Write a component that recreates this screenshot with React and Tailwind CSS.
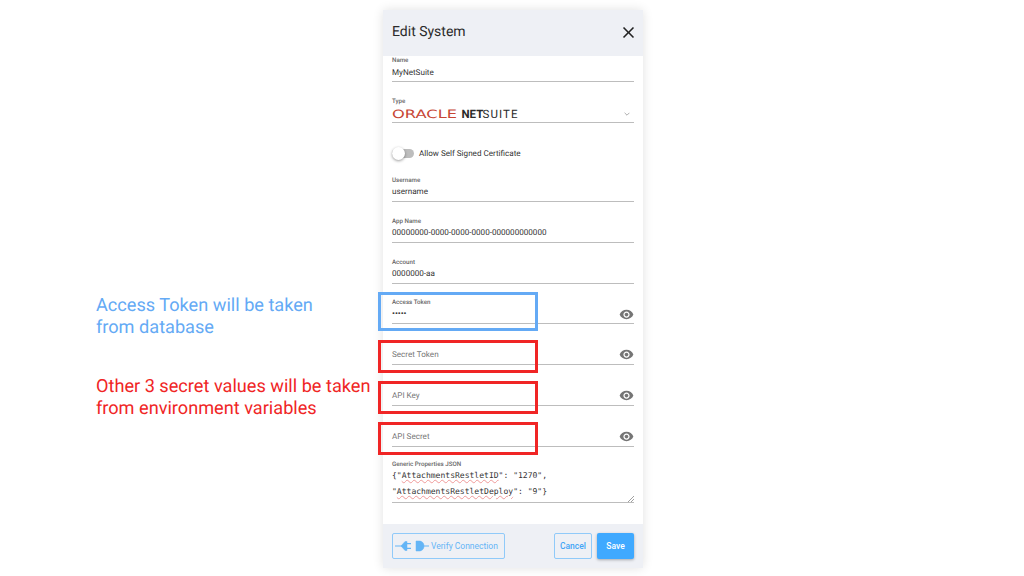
import React from "react";

const EyeIcon = () => (
  <svg viewBox="0 0 24 24" className="w-[15px] h-[15px] fill-[#757575] shrink-0">
    <path d="M12 4.5C7 4.5 2.73 7.61 1 12c1.73 4.39 6 7.5 11 7.5s9.27-3.11 11-7.5c-1.73-4.39-6-7.5-11-7.5zM12 17c-2.76 0-5-2.24-5-5s2.24-5 5-5 5 2.24 5 5-2.24 5-5 5zm0-8c-1.66 0-3 1.34-3 3s1.34 3 3 3 3-1.34 3-3-1.34-3-3-3z" />
  </svg>
);

const PlugIcon = () => (
  <svg viewBox="0 0 34 12" className="w-[34px] h-[12px] shrink-0 fill-[#64b5f6] stroke-[#64b5f6]">
    <path d="M0 6h7" strokeWidth="1" />
    <path d="M6 6l4-4.5h2v9h-2z" strokeWidth="0.5" />
    <path d="M12 3.7h4M12 8.3h4" strokeWidth="1.3" />
    <path d="M21 1h3.5c2.8 0 4.5 2.4 4.5 5s-1.7 5-4.5 5H21z" strokeWidth="0.5" />
    <path d="M29 6h5" strokeWidth="1" />
  </svg>
);

const Label = ({ children }) => (
  <div className="text-[6.2px] leading-[8px] font-medium text-[#666]">{children}</div>
);

// plain underlined field, all of them are on a 41px grid
const Field = ({ label, value }) => (
  <div className="h-[41px] pt-[15px]">
    <Label>{label}</Label>
    <div className="h-[14px] text-[8.1px] leading-[14px] text-[#333]">{value}</div>
    <div className="mt-[3px] h-px bg-[#bdbdbd]" />
  </div>
);

const SecretField = ({ label }) => (
  <div className="relative h-[41px] flex flex-col justify-end">
    <div className="absolute left-[-14px] top-[16px] w-[160px] h-[33px] border-[3px] border-[#f02525]" />
    <div className="flex items-center justify-between h-[20px]">
      <span className="text-[8.1px] leading-[20px] text-[#777]">{label}</span>
      <EyeIcon />
    </div>
    <div className="h-px bg-[#bdbdbd]" />
  </div>
);

export default function App() {
  return (
    <div className="w-[1024px] h-[576px] overflow-hidden bg-white flex font-['Roboto',sans-serif] [text-rendering:geometricPrecision]">
      <div className="w-[383px] pl-[96px] pt-[295px] shrink-0">
        <p className="text-[18.15px] leading-[22px] text-[#64aaf5]">
          Access Token will be taken
          <br />
          from database
        </p>
        <p className="mt-[37px] text-[18.15px] leading-[22px] text-[#f02525] whitespace-nowrap">
          Other 3 secret values will be taken
          <br />
          from environment variables
        </p>
      </div>

      <div className="w-[260px] h-[558px] mt-[10px] flex flex-col bg-white shadow-[0_0_10px_rgba(0,0,0,0.12)]">
        <div className="h-[46px] shrink-0 bg-[#eef0f5] flex items-center justify-between pl-[9px] pr-[5px] pb-[2px]">
          <span className="text-[14px] text-[#2b2b2b]">Edit System</span>
          <svg viewBox="0 0 24 24" className="w-[19px] h-[19px] fill-[#222]">
            <path d="M19 6.41 17.59 5 12 10.59 6.41 5 5 6.41 10.59 12 5 17.59 6.41 19 12 13.41 17.59 19 19 17.59 13.41 12z" />
          </svg>
        </div>

        <div className="flex-1 px-[9px]">
          <div className="h-[26px]">
            <Label>Name</Label>
            <div className="mt-[1px] h-[14px] text-[8.1px] leading-[14px] text-[#333]">MyNetSuite</div>
            <div className="mt-[2px] h-px bg-[#bdbdbd]" />
          </div>

          <div className="mt-[15px]">
            <Label>Type</Label>
            <div className="flex items-center justify-between h-[17px]">
              <svg viewBox="0 0 130 12" className="w-[130px] h-[12px]">
                <text x="0" y="9.5" fontSize="11.5" textLength="65" lengthAdjust="spacingAndGlyphs" fill="#c74634" fontFamily="DejaVu Sans">ORACLE</text>
                <text x="69.5" y="9.5" fontSize="11.5" fontWeight="700" fill="#2a2a2a" fontFamily="Roboto">NET</text>
                <text x="90.5" y="9.5" fontSize="11.5" textLength="35" fill="#2a2a2a" fontFamily="Roboto">SUITE</text>
              </svg>
              <svg viewBox="0 0 10 6" className="w-[6px] h-[4px] mr-[4px] stroke-[#777] fill-none">
                <path d="M1 1l4 4 4-4" strokeWidth="1" />
              </svg>
            </div>
            <div className="h-px bg-[#bdbdbd]" />
          </div>

          <div className="mt-[24px] h-[13px] flex items-center gap-[5px]">
            <div className="relative w-[22px] h-[9px] rounded-full bg-[#bdbdbd]">
              <div className="absolute left-0 top-[-2px] w-[13px] h-[13px] rounded-full bg-white shadow-[0_1px_3px_rgba(0,0,0,0.4)]" />
            </div>
            <span className="text-[8.1px] text-[#333]">Allow Self Signed Certificate</span>
          </div>

          <div className="mt-[1px]">
            <Field label="Username" value="username" />
            <Field label="App Name" value="00000000-0000-0000-0000-000000000000" />
            <Field label="Account" value="0000000-aa" />
          </div>

          <div className="relative h-[40px] pt-[14px]">
            <div className="absolute left-[-14px] top-[8px] bottom-[-7px] w-[160px] border-[3px] border-[#64aaf5]" />
            <Label>Access Token</Label>
            <div className="flex items-center justify-between h-[16px]">
              <span className="text-[8px] font-bold leading-[16px] text-[#333]">•••••</span>
              <EyeIcon />
            </div>
            <div className="mt-[1px] h-px bg-[#bdbdbd]" />
          </div>

          <SecretField label="Secret Token" />
          <SecretField label="API Key" />
          <SecretField label="API Secret" />

          <div className="mt-[13px]">
            <Label>Generic Properties JSON</Label>
            <div className="relative h-[34px] font-['DejaVu_Sans_Mono',monospace] text-[8.05px] leading-[16px] text-[#333]">
              <div>
                {'{"'}
                <span className="underline decoration-wavy decoration-[#ef9a9a] decoration-[0.6px]">AttachmentsRestletID</span>
                {'": "1270",'}
              </div>
              <div>
                {'"'}
                <span className="underline decoration-wavy decoration-[#ef9a9a] decoration-[0.6px]">AttachmentsRestletDeploy</span>
                {'": "9"}'}
              </div>
              <svg viewBox="0 0 6 6" className="absolute right-0 bottom-0 w-[6px] h-[6px] stroke-[#777]">
                <path d="M0 6l6-6M3 6l3-3" strokeWidth="0.7" />
              </svg>
            </div>
            <div className="h-px bg-[#bdbdbd]" />
          </div>
        </div>

        <div className="h-[44px] shrink-0 bg-[#eef0f5] flex items-center justify-between px-[9px]">
          <button className="w-[113px] h-[26px] flex items-center gap-[2px] pl-[2px] border border-[#90caf9] rounded-[2px] text-[#64b5f6] text-[8.5px]">
            <PlugIcon />
            <span>Verify Connection</span>
          </button>
          <div className="flex gap-[5px]">
            <button className="w-[38px] h-[26px] border border-[#90caf9] rounded-[2px] text-[#42a5f5] text-[8.5px] font-medium">Cancel</button>
            <button className="w-[37px] h-[26px] rounded-[2px] bg-[#3fa9ff] text-white text-[8.5px] font-medium shadow-[0_1px_3px_rgba(0,0,0,0.3)]">Save</button>
          </div>
        </div>
      </div>
    </div>
  );
}
